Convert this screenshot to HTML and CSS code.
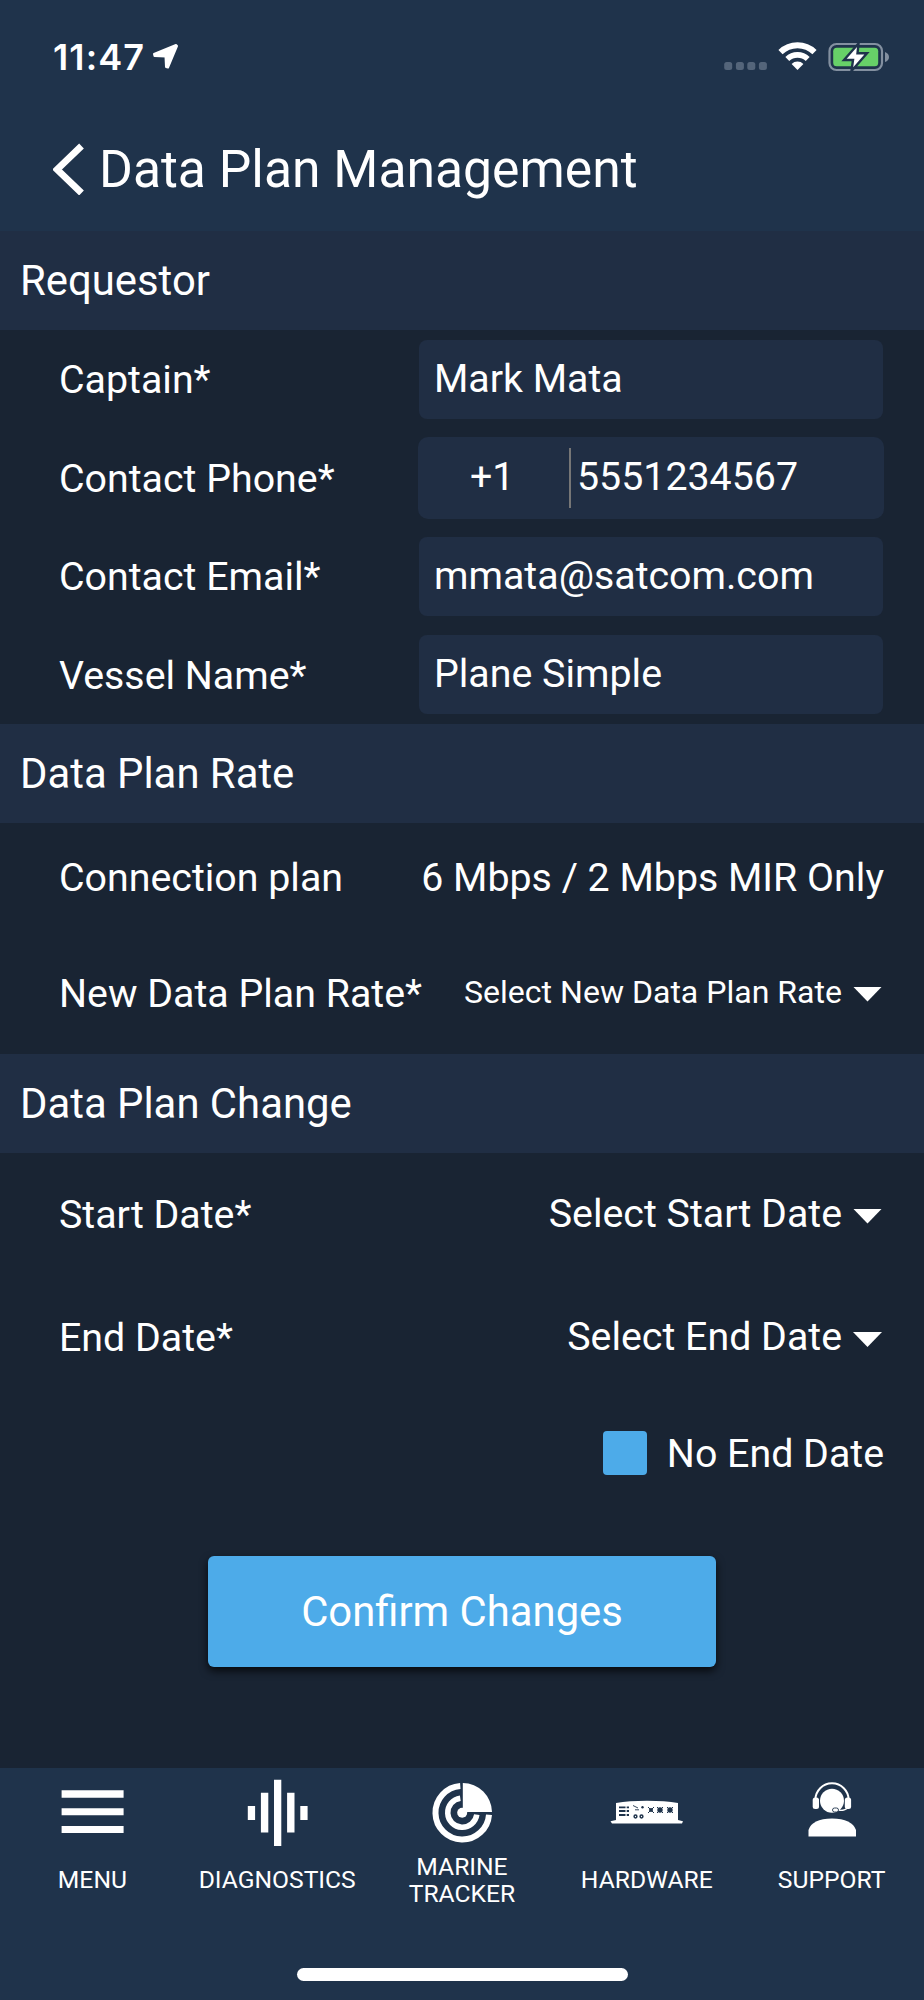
FILE: index.html
```html
<!DOCTYPE html>
<html lang="en">
<head>
<meta charset="utf-8">
<title>Data Plan Management</title>
<link rel="stylesheet" href="styles.css">
</head>
<body>
<div class="app">
  <header class="header">
    <div class="status">
      <span class="time">11:47</span>
      <svg class="location" width="27" height="27" viewBox="0 0 27 27"><path d="M24 2 L2 11 L2.500 13 L13.500 13.500 L14 24 L16 24.500 L25 3 Z" fill="#fff" stroke="#fff" stroke-width="2" stroke-linejoin="round"/></svg>
      <svg class="signals" width="168" height="32" viewBox="0 0 168 32">
        <g fill="#54657a"><rect x="4.200" y="22" width="8" height="8" rx="2.500"/><rect x="15.900" y="22" width="8" height="8" rx="2.500"/><rect x="27.300" y="22" width="8" height="8" rx="2.500"/><rect x="38.900" y="22" width="8" height="8" rx="2.500"/></g>
        <g fill="none" stroke="#fff"><path d="M60.500 12.200 A24.500 24.500 0 0 1 94.500 12.200" stroke-width="6"/><path d="M67.300 19 A14.700 14.700 0 0 1 87.700 19" stroke-width="5.600"/></g>
        <path d="M77.500 30 L71.600 24 A8.500 8.500 0 0 1 83.400 24 Z" fill="#fff"/>
        <rect x="109.500" y="4" width="52.500" height="26" rx="7" fill="none" stroke="#8390a0" stroke-width="2.200"/>
        <rect x="113.200" y="7.700" width="45" height="18.600" rx="3.500" fill="#67d068"/>
        <path d="M165 12 Q169 13.500 169 17 Q169 20.500 165 22 Z" fill="#8390a0"/>
        <path d="M138.500 3.500 L124 20 L133 20 L131.500 31 L147 13.300 L137.500 13.300 Z" fill="#fff" stroke="#1f334b" stroke-width="2.400"/>
      </svg>
    </div>
    <div class="titlebar">
      <svg width="32" height="52" viewBox="0 0 32 52"><path d="M28.500 3 L4 26.500 L28.500 50" fill="none" stroke="#fff" stroke-width="6.800"/></svg>
      <h1 class="title">Data Plan Management</h1>
    </div>
  </header>

  <main>
    <h2 class="section">Requestor</h2>
    <div class="requestor">
      <div class="row"><span class="label">Captain*</span><div class="field">Mark Mata</div></div>
      <div class="row"><span class="label">Contact Phone*</span><div class="field phone"><span class="code">+1</span><span class="number">5551234567</span></div></div>
      <div class="row"><span class="label">Contact Email*</span><div class="field">mmata@satcom.com</div></div>
      <div class="row"><span class="label">Vessel Name*</span><div class="field">Plane Simple</div></div>
    </div>

    <h2 class="section">Data Plan Rate</h2>
    <div class="row plan"><span>Connection plan</span><span class="value">6 Mbps / 2 Mbps MIR Only</span></div>
    <div class="row rate"><span class="label">New Data Plan Rate*</span><span class="select small">Select New Data Plan Rate<i class="caret"></i></span></div>

    <h2 class="section">Data Plan Change</h2>
    <div class="row start"><span class="label">Start Date*</span><span class="select">Select Start Date<i class="caret"></i></span></div>
    <div class="row end"><span>End Date*</span><span class="select">Select End Date<i class="caret"></i></span></div>
    <div class="row no-end"><span class="checkbox"></span><span class="label">No End Date</span></div>
    <button class="confirm">Confirm Changes</button>
  </main>

  <footer class="footer">
    <nav class="tabs">
      <div class="tab">
        <svg width="72" height="72" viewBox="0 0 72 72"><path d="M5.600 12.300h62v7.400h-62zM5.600 30.300h62v7h-62zM5.600 48h62v7h-62z" fill="#fff"/></svg>
        <span class="tab-label">MENU</span>
      </div>
      <div class="tab">
        <svg width="72" height="72" viewBox="0 0 72 72"><path d="M6.800 28h7.300v14H6.800zM19.900 14.800h7.400v39.700h-7.400zM33 1.700h7.300V68H33zM46.100 14.800h7.400v39.700h-7.400zM59.300 28h7.300v14h-7.300z" fill="#fff"/></svg>
        <span class="tab-label">DIAGNOSTICS</span>
      </div>
      <div class="tab">
        <svg width="72" height="72" viewBox="0 0 72 72">
          <g fill="none" stroke="#fff"><path d="M34.300 8 A26.800 26.800 0 1 0 63 36.700" stroke-width="6"/><path d="M34.300 20.200 A14.600 14.600 0 1 0 50.800 36.700" stroke-width="5.500"/></g>
          <path d="M36.800 5 A29.500 29.500 0 0 1 66 34 H36.800 Z" fill="#fff"/>
          <circle cx="36.200" cy="34.700" r="5" fill="#fff"/>
        </svg>
        <span class="tab-label two-line">MARINE<br>TRACKER</span>
      </div>
      <div class="tab">
        <svg width="76" height="72" viewBox="0 0 76 72">
          <path d="M7 25 Q20 22.800 38 22.800 Q56 22.800 69 25 V42 L74 43.300 L73 45.500 H3 L1.500 43.300 L7 42 Z" fill="#fff"/>
          <g stroke="#1f334b" fill="none"><path d="M10 29.300h10M10 33h10M10 37h10" stroke-width="1.800" stroke-dasharray="6.500 1.200"/><path d="M24 27.500l5 2.500M26 31.800h4" stroke-width=".9"/><circle cx="26.500" cy="38.500" r="1.400" stroke-width="1.500"/><circle cx="32.500" cy="38.500" r="1.400" stroke-width="1.500"/><path d="M39 29l6 6m0-6l-6 6M48 29l6 6m0-6l-6 6M58 29l6 6m0-6l-6 6" stroke-width="1"/></g>
          <g fill="#1f334b"><circle cx="33.500" cy="29.300" r="1.200"/><circle cx="42" cy="32" r="2"/><circle cx="51" cy="32" r="2.700"/><circle cx="61" cy="32" r="2.700"/></g>
        </svg>
        <span class="tab-label">HARDWARE</span>
      </div>
      <div class="tab">
        <svg width="72" height="72" viewBox="0 0 72 72">
          <path d="M19.300 22 A16.700 16.700 0 0 1 52.700 22" fill="none" stroke="#fff" stroke-width="2"/>
          <circle cx="36" cy="22.800" r="12" fill="#fff"/>
          <rect x="16.700" y="19.500" width="6.300" height="11.500" rx="2.500" fill="#fff"/><rect x="48.800" y="19.500" width="6.300" height="11.500" rx="2.500" fill="#fff"/>
          <path d="M52 29.500 Q49 33 42 32.200" fill="none" stroke="#fff" stroke-width="1.300"/>
          <rect x="36.500" y="30" width="6" height="4" rx="2" fill="#fff" stroke="#1f334b" stroke-width=".9"/>
          <path d="M12.500 58.500 V52 Q16 41 36 40.600 Q56 41 60 52 V58.500 Z" fill="#fff"/>
        </svg>
        <span class="tab-label">SUPPORT</span>
      </div>
    </nav>
    <div class="home-indicator"></div>
  </footer>
</div>
</body>
</html>
```

FILE: styles.css
```css
* { box-sizing: border-box; }

body {
  margin: 0;
  background: #192433;
  color: #fff;
  font-family: Roboto, "Liberation Sans", sans-serif;
  font-size: 39.35px;
  line-height: 48px;
  white-space: nowrap;
}

.app {
  width: 924px;
  height: 2000px;
  display: flex;
  flex-direction: column;
}

.header {
  height: 231px;
  background: #1f334b;
}

.status {
  height: 113px;
  display: flex;
  align-items: flex-start;
  padding: 40px 36px 0 53px;
}

.time {
  width: 99px;
  font-family: Inter, "Liberation Sans", sans-serif;
  font-size: 36px;
  font-weight: 600;
  letter-spacing: 1.1px;
  line-height: 34px;
}

.location { margin-top: 3px; }
.signals { margin-left: auto; overflow: visible; }

.titlebar {
  height: 112px;
  display: flex;
  align-items: center;
  gap: 14px;
  padding-left: 53px;
}

.title {
  margin: 0;
  padding-top: 1px;
  font-size: 51.65px;
  font-weight: 400;
  line-height: 60px;
}

main { height: 1537px; }

.section {
  height: 99px;
  margin: 0;
  padding-left: 20px;
  background: #202e44;
  font-size: 41.85px;
  font-weight: 400;
  line-height: 99px;
}

.requestor {
  height: 394px;
  display: grid;
  grid-template-rows: repeat(4, 1fr);
}

.row {
  display: flex;
  align-items: center;
  justify-content: space-between;
  padding: 0 41px 0 59px;
}

.label { padding-top: 2px; }
.value { margin-right: -1px; }

.field {
  width: 464px;
  height: 79px;
  padding-left: 15px;
  border-radius: 8px;
  background: #202e44;
  line-height: 78px;
}

.phone {
  width: 466px;
  height: 82px;
  display: flex;
  align-items: center;
  margin-right: -1px;
  padding-left: 0;
  border-radius: 10px;
}

.code {
  width: 153px;
  height: 60px;
  padding-left: 52px;
  border-right: 2px solid #767676;
  line-height: 58px;
}

.number {
  height: 60px;
  padding-left: 6px;
  line-height: 58px;
}

.plan { height: 109px; }
.rate { height: 122px; }
.start { height: 122px; }
.end { height: 125px; }

.select {
  display: flex;
  align-items: center;
  gap: 11px;
  margin: -1px 1px 0 0;
}

.small {
  margin-top: -3px;
  font-size: 32.05px;
}

.caret {
  width: 29px;
  height: 15px;
  margin-top: 5px;
  background: #fff;
  clip-path: polygon(0 0, 100% 0, 50% 100%);
}

.no-end {
  height: 106px;
  justify-content: flex-end;
  gap: 20px;
  padding-right: 40px;
}

.checkbox {
  width: 44px;
  height: 44px;
  border-radius: 4px;
  background: #4dabe9;
}

.confirm {
  display: block;
  width: 508px;
  height: 111px;
  margin: 50px auto 0;
  padding: 1px 0 0;
  border: 0;
  border-radius: 6px;
  background: #4dabe9;
  box-shadow: 0 4px 8px rgba(0, 0, 0, 0.75);
  color: #fff;
  font: 400 41.8px/110px Roboto, "Liberation Sans", sans-serif;
}

.footer {
  height: 232px;
  background: #1f334b;
}

.tabs {
  height: 200px;
  display: grid;
  grid-template-columns: repeat(5, 1fr);
}

.tab {
  display: flex;
  flex-direction: column;
  align-items: center;
  padding-top: 10px;
}

.tab-label {
  height: 58px;
  display: flex;
  align-items: center;
  font-size: 24.65px;
  line-height: 27px;
  text-align: center;
}

.two-line { height: 60px; }

.home-indicator {
  width: 331px;
  height: 13px;
  margin: 0 auto;
  border-radius: 7px;
  background: #fff;
}
```
